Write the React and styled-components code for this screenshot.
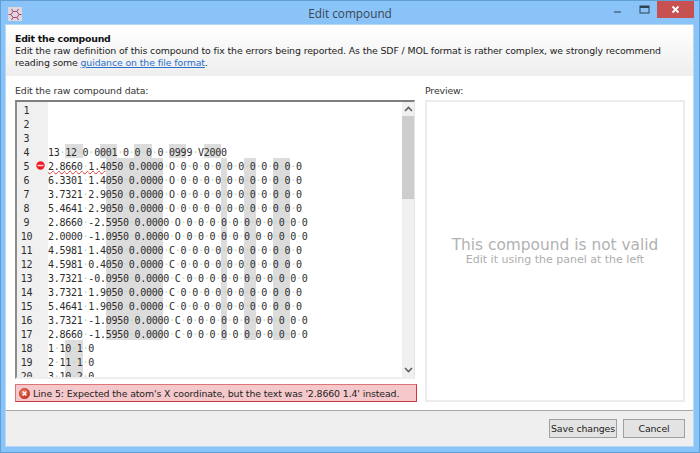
import React from 'react'
import styled, { createGlobalStyle } from 'styled-components'

const UI_FONT = '"DejaVu Sans", "Noto Sans", sans-serif'
const CHAR_W = 5.76

const GlobalStyle = createGlobalStyle`
  html, body { margin: 0; padding: 0; background: #8ac3f8; }
  * { box-sizing: border-box; }
`

const Frame = styled.div`
  width: 700px;
  height: 453px;
  display: flex;
  flex-direction: column;
  overflow: hidden;
  background: #8ac3f8;
  border: 1px solid #5f9fd6;
  font-family: ${UI_FONT};
  font-size: 9.4px;
  letter-spacing: -0.12px;
  color: #222;
`

const TitleBar = styled.div`
  height: 24px;
  flex: none;
  display: flex;
  align-items: flex-start;
  justify-content: space-between;
  padding: 0 5px 0 7px;
  position: relative;
`

const AppIcon = styled.div`
  width: 14px;
  height: 14px;
  margin-top: 6px;
  background: #dcd8dc;
  display: flex;
`

const Title = styled.div`
  position: absolute;
  left: 0;
  right: 0;
  top: 3px;
  text-align: center;
  font-family: "Open Sans", sans-serif;
  font-size: 11.8px;
  letter-spacing: 0;
  line-height: 19px;
  color: #3c4650;
`

const Controls = styled.div`
  display: flex;
  align-items: flex-start;
`

const ControlBtn = styled.div`
  width: ${p => p.$w}px;
  height: 17px;
  display: flex;
  align-items: center;
  justify-content: center;
  background: ${p => p.$bg || 'transparent'};
`

const Client = styled.div`
  flex: 1;
  min-height: 0;
  margin: 0 6px 6px 5px;
  display: flex;
  flex-direction: column;
  background: #fff;
  outline: 1px solid #b7d9f7;
`

const Header = styled.div`
  height: 51px;
  flex: none;
  padding: 8px 9px 0 9px;
  background: linear-gradient(#ffffff, #eeeeee);
  line-height: 12px;
`

const HeaderTitle = styled.div`
  font-weight: 700;
  letter-spacing: -0.25px;
  color: #111;
`

const HeaderLine = styled.div`
  white-space: nowrap;
`

const Link = styled.a`
  color: #2a6fc9;
  text-decoration: underline;
`

const Body = styled.div`
  flex: 1;
  min-height: 0;
  display: flex;
  gap: 8px;
  padding: 9px 8px 8px 9px;
`

const LeftCol = styled.div`
  width: 402px;
  flex: none;
  display: flex;
  flex-direction: column;
`

const RightCol = styled.div`
  flex: 1;
  display: flex;
  flex-direction: column;
`

const FieldLabel = styled.div`
  height: 15px;
  line-height: 12px;
  color: #333;
`

const Editor = styled.div`
  width: 400px;
  height: 279px;
  flex: none;
  display: flex;
  border-top: 2px solid #7f7f7f;
  border-left: 2px solid #8c8c8c;
  border-right: 1px solid #e4e4e4;
  border-bottom: 2px solid #eeeeee;
`

const Lines = styled.div`
  flex: 1;
  min-width: 0;
  overflow: hidden;
  font-family: "DejaVu Sans Mono", monospace;
  font-size: 10px;
  letter-spacing: ${CHAR_W - 6.02}px;
  color: #2c2c2c;
`

const Row = styled.div`
  height: 14px;
  line-height: 18px;
  display: flex;
  white-space: pre;
`

const Gutter = styled.div`
  width: 31px;
  flex: none;
  height: 14px;
  display: flex;
  align-items: flex-start;
  background: #f0f0f0;
`

const LineNo = styled.div`
  width: 19px;
  text-align: center;
`

const Mark = styled.div`
  flex: none;
  display: flex;
  height: 14px;
  align-items: center;
`

const Seg = styled.span`
  display: inline-block;
  height: 14px;
  background: ${p => (p.$shaded ? '#dcdcdc' : 'transparent')};
  text-decoration: ${p => (p.$squiggle ? 'underline wavy #e0332e 1px' : 'none')};
  text-underline-offset: 0;
`

const Dot = styled.span`
  color: #b4dcc0;
`

const ScrollBar = styled.div`
  width: 12px;
  flex: none;
  display: flex;
  flex-direction: column;
  align-items: stretch;
  background: #f0f0f0;
`

const ScrollArrow = styled.div`
  height: 14px;
  flex: none;
  display: flex;
  align-items: center;
  justify-content: center;
`

const ScrollThumb = styled.div`
  height: 83px;
  background: #cdcdcd;
`

const ScrollGap = styled.div`
  flex: 1;
`

const ErrorBar = styled.div`
  height: 18px;
  width: 402px;
  margin-top: 5px;
  flex: none;
  display: flex;
  align-items: center;
  gap: 3px;
  padding-left: 3px;
  background: #f5c9cb;
  border: 1px solid #dd7478;
  border-right-color: #c8383c;
  border-bottom-color: #c8383c;
  color: #222;
  white-space: nowrap;
  svg { flex: none; }
`

const Preview = styled.div`
  flex: 1;
  display: flex;
  flex-direction: column;
  align-items: center;
  justify-content: center;
  border: 2px solid #ececec;
`

const PreviewTitle = styled.div`
  font-size: 15.4px;
  letter-spacing: 0;
  line-height: 18px;
  color: #b2b2b2;
`

const PreviewHint = styled.div`
  font-size: 11px;
  letter-spacing: 0;
  line-height: 12px;
  color: #aeaeae;
`

const Footer = styled.div`
  height: 36px;
  flex: none;
  display: flex;
  justify-content: flex-end;
  align-items: flex-start;
  gap: 6px;
  padding: 8px 8px 0 0;
  background: #efefef;
  border-top: 1px solid #a6a6a6;
`

const Button = styled.div`
  width: ${p => p.$w}px;
  height: 19px;
  display: flex;
  align-items: center;
  justify-content: center;
  white-space: nowrap;
  background: #e3e3e3;
  border: 1px solid #a0a0a0;
  color: #222;
`

const ATOMS = [
  '2.8660 1.4050 0.0000 O',
  '6.3301 1.4050 0.0000 O',
  '3.7321 2.9050 0.0000 O',
  '5.4641 2.9050 0.0000 O',
  '2.8660 -2.5950 0.0000 O',
  '2.0000 -1.0950 0.0000 O',
  '4.5981 1.4050 0.0000 C',
  '4.5981 0.4050 0.0000 C',
  '3.7321 -0.0950 0.0000 C',
  '3.7321 1.9050 0.0000 C',
  '5.4641 1.9050 0.0000 C',
  '3.7321 -1.0950 0.0000 C',
  '2.8660 -1.5950 0.0000 C',
].map(a => a + ' 0 0 0 0 0 0 0 0 0 0 0')

const COUNT_BANDS = [[3, 6], [9, 12], [15, 18], [21, 24], [27, 30]]
const ATOM_BANDS = [[10, 20], [30, 31], [34, 36], [39, 42]]
const BOND_BANDS = [[3, 6]]

const LINES = [
  { text: '', bands: [] },
  { text: '', bands: [] },
  { text: '', bands: [] },
  { text: '13 12 0 0001 0 0 0 0 0999 V2000', bands: COUNT_BANDS },
  ...ATOMS.map(text => ({ text, bands: ATOM_BANDS })),
  { text: '1 10 1 0', bands: BOND_BANDS },
  { text: '2 11 1 0', bands: BOND_BANDS },
  { text: '3 10 2 0', bands: BOND_BANDS },
]

// cut a line at the column bands so each piece can carry its own shade
function cutLine(text, bands) {
  const pieces = []
  let at = 0
  bands.forEach(([from, to]) => {
    if (from >= text.length) return
    if (from > at) pieces.push({ text: text.slice(at, from), shaded: false })
    pieces.push({ text: text.slice(from, to), shaded: true })
    at = Math.min(to, text.length)
  })
  if (at < text.length) pieces.push({ text: text.slice(at), shaded: false })
  return pieces
}

function Chars({ text }) {
  return text.split('').map((c, i) => (c === ' ' ? <Dot key={i}>·</Dot> : c))
}

function StopMark() {
  return (
    <Mark>
      <svg width="9" height="9" viewBox="0 0 9 9">
        <circle cx="4.5" cy="4.5" r="4.2" fill="#ee1c25" />
        <rect x="1.6" y="3.8" width="5.8" height="1.4" fill="#fbd5d5" />
      </svg>
    </Mark>
  )
}

function CodeLine({ index, text, bands }) {
  const isError = index === 5
  return (
    <Row>
      <Gutter>
        <LineNo>{index}</LineNo>
        {isError && <StopMark />}
      </Gutter>
      {cutLine(text, bands).map((p, i) => (
        <Seg key={i} $shaded={p.shaded} $squiggle={isError && i === 0}>
          <Chars text={p.text} />
        </Seg>
      ))}
    </Row>
  )
}

function MoleculeIcon() {
  return (
    <svg width="14" height="14" viewBox="0 0 14 14" fill="none" stroke="#b0407f" strokeWidth="1">
      <path d="M5 4.5 L9 4.5 L11 7.5 L9 10.5 L5 10.5 L3 7.5 Z" />
      <path d="M5 4.5 L3.5 2 M9 4.5 L10.5 2 M11 7.5 L13.5 7.5 M9 10.5 L10.5 13 M5 10.5 L3.5 13 M3 7.5 L0.5 7.5" />
    </svg>
  )
}

function ErrorIcon() {
  return (
    <svg width="11" height="11" viewBox="0 0 11 11">
      <defs>
        <radialGradient id="errGlow" cx="40%" cy="35%" r="70%">
          <stop offset="0%" stopColor="#f0846a" />
          <stop offset="100%" stopColor="#c8261a" />
        </radialGradient>
      </defs>
      <circle cx="5.5" cy="5.5" r="5.2" fill="url(#errGlow)" stroke="#a8301f" strokeWidth="0.5" />
      <path d="M3.6 3.6 L7.4 7.4 M7.4 3.6 L3.6 7.4" stroke="#fff" strokeWidth="1.4" />
    </svg>
  )
}

export default function App() {
  return (
    <Frame>
      <GlobalStyle />
      <TitleBar>
        <AppIcon><MoleculeIcon /></AppIcon>
        <Title>Edit compound</Title>
        <Controls>
          <ControlBtn $w={27}>
            <svg width="9" height="9" viewBox="0 0 9 9"><rect x="1" y="6" width="7" height="2" fill="#5d7e9c" /></svg>
          </ControlBtn>
          <ControlBtn $w={26}>
            <svg width="11" height="9" viewBox="0 0 11 9" fill="none"><rect x="1" y="1" width="9" height="7" stroke="#2f4254" strokeWidth="1" /><rect x="1" y="1" width="9" height="2" fill="#2f4254" /></svg>
          </ControlBtn>
          <ControlBtn $w={37} $bg="#c75050">
            <svg width="9" height="9" viewBox="0 0 9 9"><path d="M1.5 1.5 L7.5 7.5 M7.5 1.5 L1.5 7.5" stroke="#fff" strokeWidth="1.8" /></svg>
          </ControlBtn>
        </Controls>
      </TitleBar>
      <Client>
        <Header>
          <HeaderTitle>Edit the compound</HeaderTitle>
          <HeaderLine>Edit the raw definition of this compound to fix the errors being reported. As the SDF / MOL format is rather complex, we strongly recommend</HeaderLine>
          <HeaderLine>reading some <Link>guidance on the file format</Link>.</HeaderLine>
        </Header>
        <Body>
          <LeftCol>
            <FieldLabel>Edit the raw compound data:</FieldLabel>
            <Editor>
              <Lines>
                {LINES.map((l, i) => (
                  <CodeLine key={i} index={i + 1} text={l.text} bands={l.bands} />
                ))}
              </Lines>
              <ScrollBar>
                <ScrollArrow>
                  <svg width="9" height="6" viewBox="0 0 9 6" fill="none"><path d="M1 5 L4.5 1.5 L8 5" stroke="#606060" strokeWidth="1.6" /></svg>
                </ScrollArrow>
                <ScrollThumb />
                <ScrollGap />
                <ScrollArrow>
                  <svg width="9" height="6" viewBox="0 0 9 6" fill="none"><path d="M1 1 L4.5 4.5 L8 1" stroke="#606060" strokeWidth="1.6" /></svg>
                </ScrollArrow>
              </ScrollBar>
            </Editor>
            <ErrorBar>
              <ErrorIcon />
              Line 5: Expected the atom's X coordinate, but the text was '2.8660 1.4' instead.
            </ErrorBar>
          </LeftCol>
          <RightCol>
            <FieldLabel>Preview:</FieldLabel>
            <Preview>
              <PreviewTitle>This compound is not valid</PreviewTitle>
              <PreviewHint>Edit it using the panel at the left</PreviewHint>
            </Preview>
          </RightCol>
        </Body>
        <Footer>
          <Button $w={68}>Save changes</Button>
          <Button $w={62}>Cancel</Button>
        </Footer>
      </Client>
    </Frame>
  )
}
